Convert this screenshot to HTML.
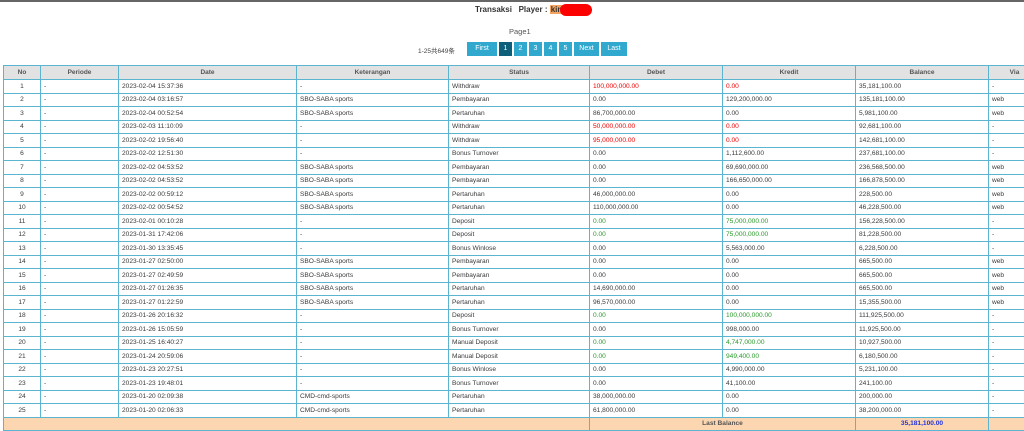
<!DOCTYPE html>
<html><head><meta charset="utf-8"><style>
body{margin:0;width:1024px;height:430px;overflow:hidden;background:#fff;font-family:"Liberation Sans","Noto Sans CJK SC",sans-serif;color:#3a3a3a;position:relative}
.topl{position:absolute;top:0;left:0;width:1024px;height:2px;background:#666}
.title{position:absolute;top:4px;left:475px;font-size:8px;font-weight:bold;color:#333}
.title .k{background:#f4a460;padding:0 1px}
.red{display:inline-block;width:32px;height:12px;background:#f00;border-radius:7px;vertical-align:middle;margin-left:-3px}
.page{position:absolute;top:27px;left:509px;font-size:7.5px;color:#555}
.cnt{position:absolute;top:45px;left:418px;font-size:6.5px;color:#444}
.pg{position:absolute;top:42px;left:467px;display:flex;gap:2px}
.pg span{display:block;height:14px;line-height:14px;background:#31a9cf;color:#fff;font-size:7px;text-align:center;padding:0}
table{position:absolute;left:3px;top:65px;border-collapse:collapse;table-layout:fixed;width:1037px;font-size:6.6px}
td,th{border:1px solid #5bb5d0;height:12.5px;padding:0 3px;white-space:nowrap;overflow:hidden}
th{background:#e2e2e2;height:13px;font-weight:bold;color:#555;font-size:6.5px}
td:first-child{text-align:center}
.r{color:#e00}.g{color:#2a9a2a}
tr.f td{background:#fcd6b0;font-weight:bold;text-align:center;color:#555}
.b{color:#2233dd!important}
</style></head><body>
<div class="topl"></div>
<div class="title">Transaksi &nbsp;&nbsp;Player : <span class="k">kin</span><span class="red"></span></div>
<div class="page">Page1</div>
<div class="cnt">1-25共649条</div>
<div class="pg"><span style="width:30px">First</span><span style="width:13px;background:#0d5f7a">1</span><span style="width:13px">2</span><span style="width:13px">3</span><span style="width:13px">4</span><span style="width:13px">5</span><span style="width:25px">Next</span><span style="width:26px">Last</span></div>
<table>
<colgroup><col style="width:37px"><col style="width:78px"><col style="width:178px"><col style="width:152px"><col style="width:141px"><col style="width:133px"><col style="width:133px"><col style="width:133px"><col style="width:52px"></colgroup>
<tr><th>No</th><th>Periode</th><th>Date</th><th>Keterangan</th><th>Status</th><th>Debet</th><th>Kredit</th><th>Balance</th><th>Via</th></tr>
<tr><td>1</td><td>-</td><td>2023-02-04 15:37:36</td><td>-</td><td>Withdraw</td><td class="r">100,000,000.00</td><td class="r">0.00</td><td>35,181,100.00</td><td>-</td></tr>
<tr><td>2</td><td>-</td><td>2023-02-04 03:16:57</td><td>SBO-SABA sports</td><td>Pembayaran</td><td>0.00</td><td>129,200,000.00</td><td>135,181,100.00</td><td>web</td></tr>
<tr><td>3</td><td>-</td><td>2023-02-04 00:52:54</td><td>SBO-SABA sports</td><td>Pertaruhan</td><td>86,700,000.00</td><td>0.00</td><td>5,981,100.00</td><td>web</td></tr>
<tr><td>4</td><td>-</td><td>2023-02-03 11:10:09</td><td>-</td><td>Withdraw</td><td class="r">50,000,000.00</td><td class="r">0.00</td><td>92,681,100.00</td><td>-</td></tr>
<tr><td>5</td><td>-</td><td>2023-02-02 19:56:40</td><td>-</td><td>Withdraw</td><td class="r">95,000,000.00</td><td class="r">0.00</td><td>142,681,100.00</td><td>-</td></tr>
<tr><td>6</td><td>-</td><td>2023-02-02 12:51:30</td><td>-</td><td>Bonus Turnover</td><td>0.00</td><td>1,112,600.00</td><td>237,681,100.00</td><td>-</td></tr>
<tr><td>7</td><td>-</td><td>2023-02-02 04:53:52</td><td>SBO-SABA sports</td><td>Pembayaran</td><td>0.00</td><td>69,690,000.00</td><td>236,568,500.00</td><td>web</td></tr>
<tr><td>8</td><td>-</td><td>2023-02-02 04:53:52</td><td>SBO-SABA sports</td><td>Pembayaran</td><td>0.00</td><td>166,650,000.00</td><td>166,878,500.00</td><td>web</td></tr>
<tr><td>9</td><td>-</td><td>2023-02-02 00:59:12</td><td>SBO-SABA sports</td><td>Pertaruhan</td><td>46,000,000.00</td><td>0.00</td><td>228,500.00</td><td>web</td></tr>
<tr><td>10</td><td>-</td><td>2023-02-02 00:54:52</td><td>SBO-SABA sports</td><td>Pertaruhan</td><td>110,000,000.00</td><td>0.00</td><td>46,228,500.00</td><td>web</td></tr>
<tr><td>11</td><td>-</td><td>2023-02-01 00:10:28</td><td>-</td><td>Deposit</td><td class="g">0.00</td><td class="g">75,000,000.00</td><td>156,228,500.00</td><td>-</td></tr>
<tr><td>12</td><td>-</td><td>2023-01-31 17:42:06</td><td>-</td><td>Deposit</td><td class="g">0.00</td><td class="g">75,000,000.00</td><td>81,228,500.00</td><td>-</td></tr>
<tr><td>13</td><td>-</td><td>2023-01-30 13:35:45</td><td>-</td><td>Bonus Winlose</td><td>0.00</td><td>5,563,000.00</td><td>6,228,500.00</td><td>-</td></tr>
<tr><td>14</td><td>-</td><td>2023-01-27 02:50:00</td><td>SBO-SABA sports</td><td>Pembayaran</td><td>0.00</td><td>0.00</td><td>665,500.00</td><td>web</td></tr>
<tr><td>15</td><td>-</td><td>2023-01-27 02:49:59</td><td>SBO-SABA sports</td><td>Pembayaran</td><td>0.00</td><td>0.00</td><td>665,500.00</td><td>web</td></tr>
<tr><td>16</td><td>-</td><td>2023-01-27 01:26:35</td><td>SBO-SABA sports</td><td>Pertaruhan</td><td>14,690,000.00</td><td>0.00</td><td>665,500.00</td><td>web</td></tr>
<tr><td>17</td><td>-</td><td>2023-01-27 01:22:59</td><td>SBO-SABA sports</td><td>Pertaruhan</td><td>96,570,000.00</td><td>0.00</td><td>15,355,500.00</td><td>web</td></tr>
<tr><td>18</td><td>-</td><td>2023-01-26 20:16:32</td><td>-</td><td>Deposit</td><td class="g">0.00</td><td class="g">100,000,000.00</td><td>111,925,500.00</td><td>-</td></tr>
<tr><td>19</td><td>-</td><td>2023-01-26 15:05:59</td><td>-</td><td>Bonus Turnover</td><td>0.00</td><td>998,000.00</td><td>11,925,500.00</td><td>-</td></tr>
<tr><td>20</td><td>-</td><td>2023-01-25 16:40:27</td><td>-</td><td>Manual Deposit</td><td class="g">0.00</td><td class="g">4,747,000.00</td><td>10,927,500.00</td><td>-</td></tr>
<tr><td>21</td><td>-</td><td>2023-01-24 20:59:06</td><td>-</td><td>Manual Deposit</td><td class="g">0.00</td><td class="g">949,400.00</td><td>6,180,500.00</td><td>-</td></tr>
<tr><td>22</td><td>-</td><td>2023-01-23 20:27:51</td><td>-</td><td>Bonus Winlose</td><td>0.00</td><td>4,990,000.00</td><td>5,231,100.00</td><td>-</td></tr>
<tr><td>23</td><td>-</td><td>2023-01-23 19:48:01</td><td>-</td><td>Bonus Turnover</td><td>0.00</td><td>41,100.00</td><td>241,100.00</td><td>-</td></tr>
<tr><td>24</td><td>-</td><td>2023-01-20 02:09:38</td><td>CMD-cmd-sports</td><td>Pertaruhan</td><td>38,000,000.00</td><td>0.00</td><td>200,000.00</td><td>-</td></tr>
<tr><td>25</td><td>-</td><td>2023-01-20 02:06:33</td><td>CMD-cmd-sports</td><td>Pertaruhan</td><td>61,800,000.00</td><td>0.00</td><td>38,200,000.00</td><td>-</td></tr>
<tr class="f"><td colspan="5"></td><td colspan="2">Last Balance</td><td class="b">35,181,100.00</td><td></td></tr>
</table>
</body></html>
